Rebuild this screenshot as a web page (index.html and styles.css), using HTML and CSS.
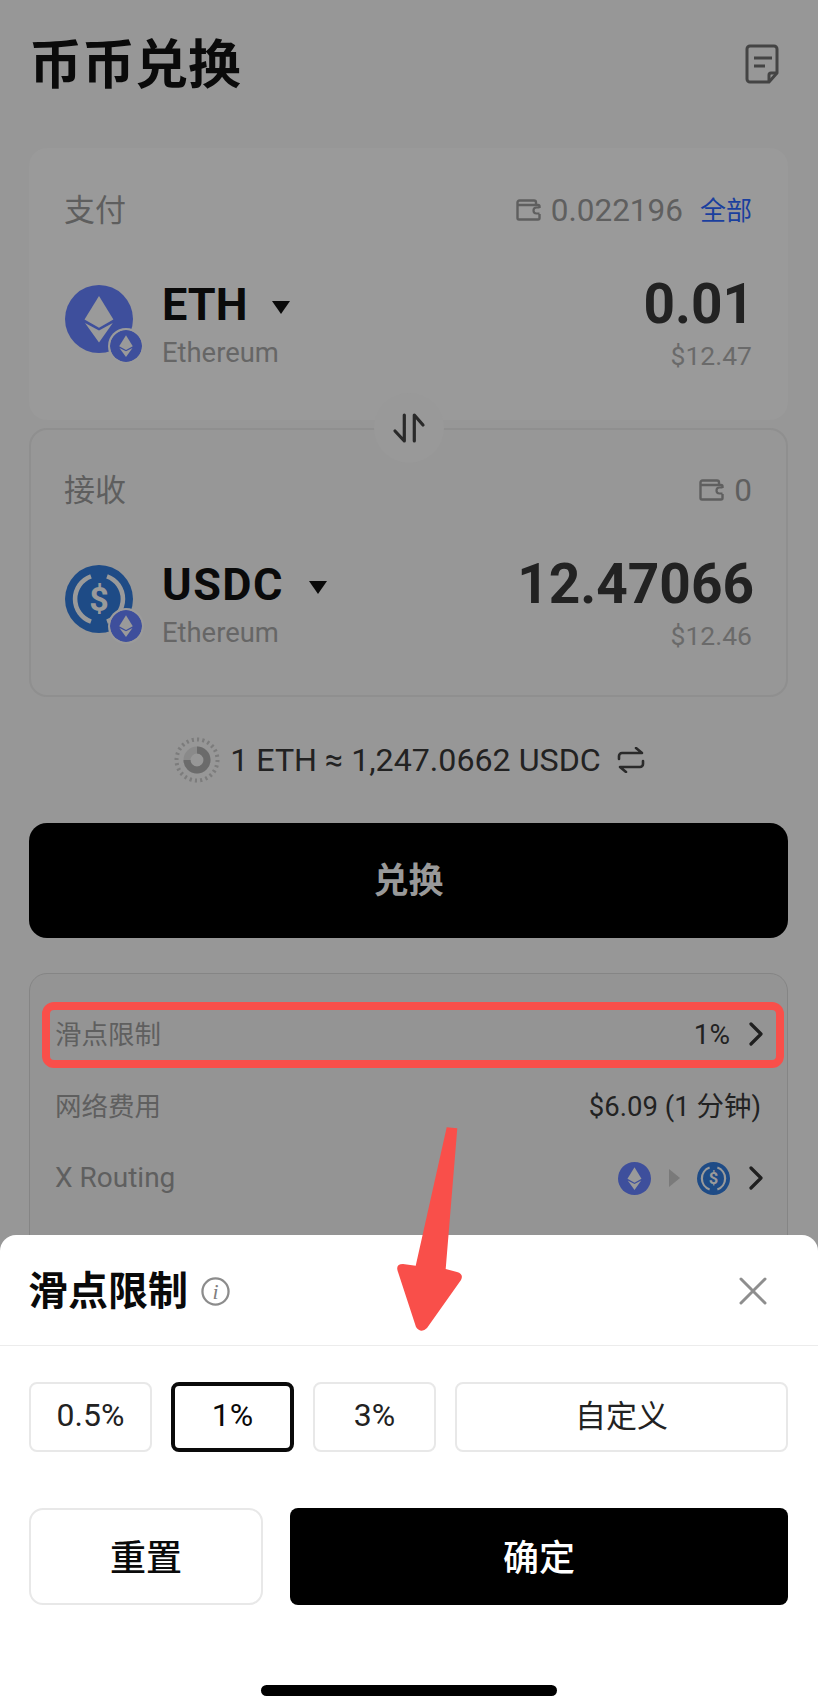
FILE: index.html
```html
<!DOCTYPE html>
<html lang="zh-CN">
<head>
  <meta charset="UTF-8" />
  <meta name="viewport" content="width=device-width, initial-scale=1.0"/>
  <title>币币兑换</title>
  <link rel="stylesheet" href="styles.css">
</head>
<body>
  <svg class="defs" width="0" height="0">
    <symbol id="eth-logo" viewBox="0 0 68 68">
      <circle cx="34" cy="34" r="34" fill="#3e4f9c"/>
      <path d="M34 11 48.4 34.5 34 42.7 19.5 34.5Z" fill="#9a9a9a"/>
      <path d="M20 38 34 45.4 47.8 38 34 57.6Z" fill="#9a9a9a"/>
    </symbol>
    <symbol id="usdc-ring" viewBox="0 0 68 68">
      <circle cx="34" cy="34" r="34" fill="#1e4b86"/>
      <path d="M26 11.4A24 24 0 0 0 26 56.6M42 11.4A24 24 0 0 1 42 56.6" fill="none" stroke="#9a9a9a" stroke-width="4.6"/>
    </symbol>
    <symbol id="wallet" viewBox="0 0 26 22">
      <path d="M1.5 6V3.5a2 2 0 0 1 2-2H18a2 2 0 0 1 2 2V6M1.5 6v13a1.5 1.5 0 0 0 1.5 1.5h19a1.5 1.5 0 0 0 1.5-1.5v-4M1.5 6H22a1.5 1.5 0 0 1 1.5 1.5V9" fill="none" stroke="#5f5f5f" stroke-width="2.4"/>
      <path d="M23.5 8.5h-3a3 3 0 0 0 0 6h3" fill="none" stroke="#5f5f5f" stroke-width="2.2"/>
    </symbol>
    <symbol id="chevron" viewBox="0 0 14 24">
      <path d="M2 2 12 12 2 22" fill="none" stroke="#1f1f1f" stroke-width="3.2" stroke-linecap="round" stroke-linejoin="round"/>
    </symbol>
  </svg>

  <div class="screen">
    <header class="header">
      <h1>币币兑换</h1>
      <svg class="history-icon" viewBox="0 0 34 40">
        <path d="M5 2h24a3 3 0 0 1 3 3v24l-8 9H5a3 3 0 0 1-3-3V5a3 3 0 0 1 3-3Z" fill="none" stroke="#444" stroke-width="3" stroke-linejoin="round"/>
        <path d="M24 37v-6a2 2 0 0 1 2-2h6" fill="none" stroke="#444" stroke-width="3"/>
        <path d="M9 14h18M9 22h11" stroke="#444" stroke-width="3"/>
      </svg>
    </header>

    <section class="card card-pay">
      <div class="label-row">
        <span class="label">支付</span>
        <span class="balance">
          <svg class="wallet-icon"><use href="#wallet"/></svg>
          <span>0.022196</span>
          <a class="all-link">全部</a>
        </span>
      </div>
      <div class="token-row">
        <div class="token">
          <div class="token-icon">
            <svg class="logo"><use href="#eth-logo"/></svg>
            <svg class="chain-badge"><use href="#eth-logo"/></svg>
          </div>
          <div class="token-name">
            <div class="symbol">ETH <i class="caret"></i></div>
            <div class="network">Ethereum</div>
          </div>
        </div>
        <div class="amount">
          <div class="value">0.01</div>
          <div class="fiat">$12.47</div>
        </div>
      </div>
    </section>

    <div class="swap-btn">
      <svg viewBox="0 0 38 34" width="38" height="34">
        <path d="M14.3 4V30L5 20M24.3 30V4L33 14" fill="none" stroke="#2a2a2a" stroke-width="3.2" stroke-linecap="round" stroke-linejoin="round"/>
      </svg>
    </div>

    <section class="card card-receive">
      <div class="label-row">
        <span class="label">接收</span>
        <span class="balance">
          <svg class="wallet-icon"><use href="#wallet"/></svg>
          <span>0</span>
        </span>
      </div>
      <div class="token-row">
        <div class="token">
          <div class="token-icon">
            <svg class="logo" viewBox="0 0 68 68">
              <use href="#usdc-ring" width="68" height="68"/>
              <text x="34" y="46" text-anchor="middle" font-size="34" font-weight="700" fill="#9a9a9a">$</text>
            </svg>
            <svg class="chain-badge"><use href="#eth-logo"/></svg>
          </div>
          <div class="token-name">
            <div class="symbol wide">USDC <i class="caret"></i></div>
            <div class="network">Ethereum</div>
          </div>
        </div>
        <div class="amount">
          <div class="value">12.47066</div>
          <div class="fiat">$12.46</div>
        </div>
      </div>
    </section>

    <div class="rate">
      <svg class="rate-spinner" viewBox="0 0 46 46">
        <circle cx="23" cy="23" r="20.5" fill="none" stroke="#7c7c7c" stroke-width="4" stroke-dasharray="2 3" pathLength="120"/>
        <circle cx="23" cy="23" r="10" fill="none" stroke="#8a8a8a" stroke-width="7"/>
        <circle cx="23" cy="23" r="10" fill="none" stroke="#6b6b6b" stroke-width="7" stroke-dasharray="75 25" pathLength="100" transform="rotate(-90 23 23)"/>
      </svg>
      <span>1 ETH ≈ 1,247.0662 USDC</span>
      <svg class="rate-refresh" viewBox="0 0 28 26">
        <path d="M2 12V9a3 3 0 0 1 3-3h20L19 1M26 14v3a3 3 0 0 1-3 3H3l6 5" fill="none" stroke="#2a2a2a" stroke-width="2.6" stroke-linecap="round" stroke-linejoin="round"/>
      </svg>
    </div>

    <button class="swap-submit">兑换</button>

    <section class="info">
      <div class="info-row highlighted">
        <span class="info-label">滑点限制</span>
        <span class="info-value">1% <svg class="chevron"><use href="#chevron"/></svg></span>
      </div>
      <div class="info-row">
        <span class="info-label">网络费用</span>
        <span class="info-value fee">$6.09 (1 分钟)</span>
      </div>
      <div class="info-row">
        <span class="info-label route-label">X Routing</span>
        <span class="info-value route">
          <svg class="route-logo"><use href="#eth-logo"/></svg>
          <i class="route-arrow"></i>
          <svg class="route-logo" viewBox="0 0 68 68">
            <use href="#usdc-ring" width="68" height="68"/>
            <text x="34" y="46" text-anchor="middle" font-size="34" font-weight="700" fill="#9a9a9a">$</text>
          </svg>
          <svg class="chevron"><use href="#chevron"/></svg>
        </span>
      </div>
    </section>

    <section class="sheet">
      <div class="sheet-header">
        <div class="sheet-title">
          <h2>滑点限制</h2>
          <svg class="info-icon" viewBox="0 0 28 28">
            <circle cx="14" cy="14" r="12.6" fill="none" stroke="#8c8c8c" stroke-width="2.2"/>
            <text x="14" y="21" text-anchor="middle" font-size="21" font-style="italic" fill="#7f7f7f" font-family="'Liberation Serif', serif">i</text>
          </svg>
        </div>
        <svg class="close-icon" viewBox="0 0 28 28">
          <path d="M2 2 26 26M26 2 2 26" stroke="#8e8e8e" stroke-width="3" stroke-linecap="round"/>
        </svg>
      </div>

      <div class="options">
        <button class="option">0.5%</button>
        <button class="option selected">1%</button>
        <button class="option">3%</button>
        <button class="option custom">自定义</button>
      </div>

      <div class="actions">
        <button class="btn-reset">重置</button>
        <button class="btn-confirm">确定</button>
      </div>

      <div class="home-bar"></div>
    </section>

    <svg class="arrow" viewBox="0 0 80 220">
      <path d="M56.7 7.3 67.3 8.3 55.7 149 67 152Q74 154 71 160L37 208Q31 214 26 207L8 152Q5 144 13 144L25.7 145.7Z" fill="#f94f4a"/>
    </svg>
  </div>
</body>
</html>
```

FILE: styles.css
```css
* {
  margin: 0;
  padding: 0;
  box-sizing: border-box;
}

body {
  width: 818px;
  height: 1706px;
  overflow: hidden;
  font-family: Roboto, "Noto Sans CJK SC", sans-serif;
}

.defs {
  position: absolute;
}

.screen {
  position: relative;
  width: 818px;
  height: 1706px;
  padding: 0 30px 0 29px;
  background: #979797;
  overflow: hidden;
}

.header {
  height: 124px;
  margin-bottom: 24px;
  padding: 0 9px 0 0;
  display: flex;
  justify-content: space-between;
  align-items: center;
}

h1 {
  padding-bottom: 2px;
  font-size: 53px;
  font-weight: 700;
  color: #0a0a0a;
}

.history-icon {
  width: 34px;
  height: 40px;
  margin-top: 4px;
}

.card {
  padding: 0 36px;
  background: #9a9a9a;
  border-radius: 18px;
}

.card-pay {
  height: 272px;
  padding-top: 42px;
}

.card-receive {
  height: 269px;
  margin-top: 8px;
  padding-top: 40px;
  background: #979797;
  border: 2px solid #8f8f8f;
  padding-left: 34px;
  padding-right: 34px;
}

.label-row {
  height: 40px;
  display: flex;
  justify-content: space-between;
  align-items: center;
}

.label {
  margin-left: -1px;
  padding-bottom: 6px;
  font-size: 31px;
  color: #5e5e5e;
}

.balance {
  display: flex;
  align-items: center;
  font-size: 31.5px;
  color: #5f5f5f;
}

.wallet-icon {
  width: 26px;
  height: 22px;
  margin-right: 9px;
}

.all-link {
  margin-left: 17px;
  padding-bottom: 4px;
  font-size: 26px;
  color: #1a3f9e;
}

.token-row {
  margin-top: 50px;
  display: flex;
  justify-content: space-between;
}

.token {
  display: flex;
}

.token-icon {
  position: relative;
  width: 68px;
  height: 68px;
  margin: 5px 29px 0 0;
}

.logo {
  display: block;
  width: 68px;
  height: 68px;
}

.chain-badge {
  position: absolute;
  left: 43px;
  top: 43px;
  width: 36px;
  height: 36px;
  padding: 2px;
  background: #9b9b9b;
  border-radius: 50%;
}

.symbol {
  height: 46px;
  margin-top: 2px;
  line-height: 46px;
  font-size: 45px;
  font-weight: 700;
  color: #0a0a0a;
  display: flex;
  align-items: center;
}

.symbol.wide {
  letter-spacing: 1.5px;
}

.caret {
  width: 0;
  height: 0;
  margin-left: 25px;
  margin-top: 4px;
  border-left: 9px solid transparent;
  border-right: 9px solid transparent;
  border-top: 13px solid #0a0a0a;
}

.network {
  margin-top: 9px;
  height: 32px;
  line-height: 32px;
  font-size: 27.4px;
  color: #666;
}

.amount {
  margin-right: -2px;
  text-align: right;
}

.value {
  height: 46px;
  margin-top: 1px;
  line-height: 46px;
  font-size: 55px;
  font-weight: 700;
  color: #222;
}

.fiat {
  margin-top: 13px;
  margin-right: 2px;
  height: 32px;
  line-height: 32px;
  font-size: 26.5px;
  color: #6a6a6a;
}

.swap-btn {
  position: absolute;
  left: 374px;
  top: 393px;
  width: 70px;
  height: 70px;
  border-radius: 50%;
  background: #999;
  display: flex;
  align-items: center;
  justify-content: center;
}

.rate {
  height: 40px;
  margin-top: 43px;
  display: flex;
  justify-content: center;
  align-items: center;
  font-size: 32.2px;
  color: #222;
}

.rate-spinner {
  width: 46px;
  height: 46px;
  margin-right: 12px;
  transform: translateX(2px);
}

.rate-refresh {
  width: 28px;
  height: 26px;
  margin-left: 16px;
}

button {
  border: none;
  font-family: inherit;
}

.swap-submit {
  display: block;
  width: 100%;
  height: 115px;
  margin-top: 43px;
  padding-bottom: 6px;
  background: #000;
  border-radius: 18px;
  font-size: 35px;
  font-weight: 700;
  color: #999;
}

.info {
  height: 300px;
  margin-top: 35px;
  padding: 35px 26px 0 25px;
  border: 1px solid #858585;
  border-radius: 18px;
  background: #949494;
}

.info-row {
  position: relative;
  height: 50px;
  margin-bottom: 22px;
  display: flex;
  justify-content: space-between;
  align-items: center;
  font-size: 28px;
}

/* red annotation drawn on the screenshot */
.highlighted::after {
  content: "";
  position: absolute;
  inset: -7px -23px -9px -13px;
  border: 8px solid #f94f4a;
  border-radius: 12px;
}

.info-label {
  padding-bottom: 4px;
  font-size: 26.5px;
  color: #5f5f5f;
}

.info-label.route-label {
  padding-bottom: 2px;
  font-size: 28px;
}

.info-value {
  display: flex;
  align-items: center;
  color: #222;
}

.fee {
  padding-bottom: 4px;
  font-size: 27.5px;
}

.chevron {
  width: 14px;
  height: 24px;
  margin: 0 -2px 0 19px;
}

.route-logo {
  width: 33px;
  height: 33px;
}

.route-arrow {
  width: 0;
  height: 0;
  margin: 0 17px 0 18px;
  border-left: 11px solid #7a7a7a;
  border-top: 9px solid transparent;
  border-bottom: 9px solid transparent;
}

.sheet {
  position: absolute;
  left: 0;
  right: 0;
  top: 1235px;
  bottom: 0;
  background: #fff;
  border-radius: 16px 16px 0 0;
}

.sheet-header {
  height: 111px;
  padding: 0 51px 0 28px;
  display: flex;
  justify-content: space-between;
  align-items: center;
  border-bottom: 1px solid #ececec;
}

.sheet-title {
  display: flex;
  align-items: center;
}

h2 {
  padding-bottom: 4px;
  font-size: 40px;
  font-weight: 700;
  color: #0a0a0a;
}

.info-icon {
  width: 29px;
  height: 29px;
  margin: 2px 0 0 13px;
}

.close-icon {
  width: 28px;
  height: 28px;
  margin-top: 2px;
}

.options {
  margin-top: 36px;
  padding: 0 30px 0 29px;
  display: flex;
  gap: 19px;
}

.option {
  width: 123px;
  height: 70px;
  padding-bottom: 4px;
  background: #fff;
  border: 2px solid #e8e8e8;
  border-radius: 8px;
  font-size: 32px;
  color: #222;
}

.option.selected {
  border: 4px solid #0a0a0a;
  color: #0a0a0a;
}

.option.custom {
  flex: 1;
  padding-bottom: 8px;
  font-size: 31px;
}

.actions {
  margin-top: 56px;
  padding: 0 30px 0 29px;
  display: flex;
  gap: 27px;
}

.btn-reset,
.btn-confirm {
  height: 97px;
  padding-bottom: 4px;
  font-size: 36px;
  font-weight: 500;
}

.btn-reset {
  width: 234px;
  background: #fff;
  border: 2px solid #e8e8e8;
  border-radius: 14px;
  color: #0a0a0a;
}

.btn-confirm {
  flex: 1;
  background: #000;
  border-radius: 8px;
  color: #fff;
}

.home-bar {
  width: 296px;
  height: 11px;
  margin: 80px auto 0;
  background: #000;
  border-radius: 6px;
}

.arrow {
  position: absolute;
  left: 390px;
  top: 1120px;
  width: 80px;
  height: 220px;
}
```
